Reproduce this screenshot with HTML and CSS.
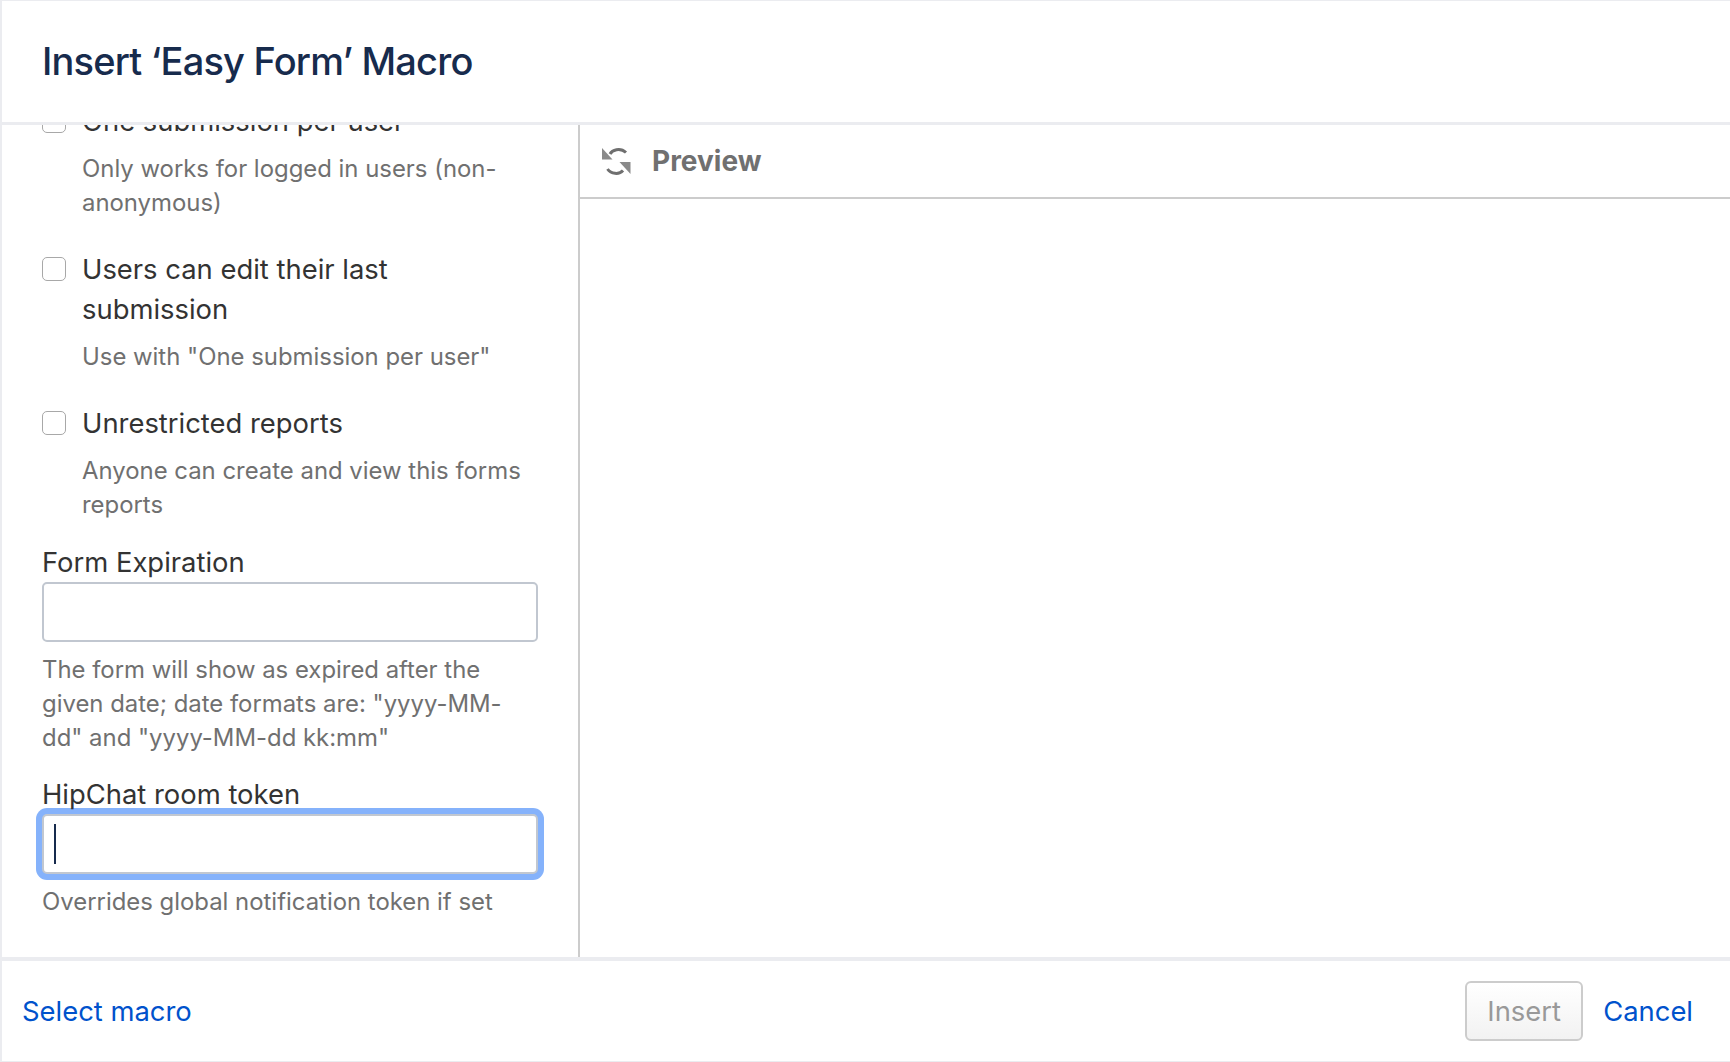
FILE: index.html
```html
<!DOCTYPE html>
<html lang="en">
<head>
<meta charset="utf-8">
<title>Insert 'Easy Form' Macro</title>
<link rel="stylesheet" href="styles.css">
</head>
<body>
<div class="dialog">
  <header class="dialog-header">
    <h1 class="dialog-title">Insert ‘Easy Form’ Macro</h1>
  </header>
  <main class="dialog-body">
    <section class="options">
      <div class="options-inner">
        <div class="check-item">
          <span class="checkbox"></span>
          <div class="check-text">
            <div class="check-label">One submission per user</div>
            <div class="hint">Only works for logged in users (non-anonymous)</div>
          </div>
        </div>
        <div class="check-item">
          <span class="checkbox"></span>
          <div class="check-text">
            <div class="check-label">Users can edit their last submission</div>
            <div class="hint">Use with "One submission per user"</div>
          </div>
        </div>
        <div class="check-item">
          <span class="checkbox"></span>
          <div class="check-text">
            <div class="check-label">Unrestricted reports</div>
            <div class="hint">Anyone can create and view this forms reports</div>
          </div>
        </div>
        <div class="field">
          <div class="field-label">Form Expiration</div>
          <div class="text-input"></div>
          <div class="hint">The form will show as expired after the given date; date formats are: "yyyy-MM-dd" and "yyyy-MM-dd kk:mm"</div>
        </div>
        <div class="field">
          <div class="field-label">HipChat room token</div>
          <div class="text-input focused"><span class="caret"></span></div>
          <div class="hint">Overrides global notification token if set</div>
        </div>
      </div>
    </section>
    <section class="preview">
      <div class="preview-head">
        <svg class="refresh" viewBox="0 0 30 30" width="30" height="30" aria-hidden="true">
          <path d="M9 8C11 4 19 1 25 6.500" fill="none" stroke="#6f6f6f" stroke-width="3"/>
          <path d="M1 2V13.500H11.500z" fill="#8a8a8a"/>
          <path d="M6.500 23C10 28 18 29 22 24.500" fill="none" stroke="#6f6f6f" stroke-width="3"/>
          <path d="M29.500 16H18.500L29.500 28z" fill="#8a8a8a"/>
        </svg>
        <span class="preview-title">Preview</span>
      </div>
    </section>
  </main>
  <footer class="dialog-footer">
    <a class="link" href="#">Select macro</a>
    <div class="actions">
      <button class="btn" type="button" disabled>Insert</button>
      <a class="link" href="#">Cancel</a>
    </div>
  </footer>
</div>
</body>
</html>
```
FILE: styles.css
```css
* { box-sizing: border-box; }
html, body { margin: 0; height: 100%; background: #fff; }
body {
  font-family: Inter, "Liberation Sans", sans-serif;
  color: #333;
}
.dialog {
  display: flex;
  flex-direction: column;
  height: 1062px;
  border-top: 1px solid #ebecf0;
  border-bottom: 1px solid #ebecf0;
  border-left: 2px solid #ebecf0;
  overflow: hidden;
}
.dialog-header {
  height: 124px;
  flex: none;
  display: flex;
  align-items: center;
  padding: 0 0 1px 40px;
  border-bottom: 3px solid #ebecf0;
}
.dialog-title {
  margin: 0;
  font-size: 38px;
  line-height: 48px;
  font-weight: 500;
  color: #172b4d;
  letter-spacing: -0.8px;
}
.dialog-body {
  flex: 1;
  display: flex;
  min-height: 0;
}
.options {
  width: 578px;
  flex: none;
  border-right: 2px solid #ccc;
  overflow: hidden;
  padding: 0 40px;
}
.options-inner { margin-top: -24px; }
.check-item {
  display: flex;
  gap: 16px;
  margin-bottom: 29px;
}
.check-item:nth-child(3) { margin-bottom: 20px; }
.checkbox {
  width: 24px;
  height: 24px;
  flex: none;
  margin-top: 8px;
  background: #fff;
  border: 1px solid #a8a8a8;
  border-radius: 5px;
}
.check-label, .field-label {
  font-size: 27.4px;
  line-height: 40px;
  color: #333;
}
.hint {
  font-size: 23.9px;
  line-height: 34px;
  color: #707070;
}
.check-label + .hint { margin-top: 11px; }
.field { margin-bottom: 19px; }
.text-input {
  height: 60px;
  display: flex;
  align-items: center;
  padding-left: 10px;
  background: #fff;
  border: 2px solid #c1c7d0;
  border-radius: 5px;
  margin-bottom: 11px;
}
.text-input.focused { box-shadow: 0 0 0 6px #85b2fb; }
.caret { width: 2px; height: 40px; background: #172b4d; }
.preview { flex: 1; min-width: 0; }
.preview-head {
  height: 74px;
  display: flex;
  align-items: center;
  gap: 21px;
  padding-left: 21px;
  border-bottom: 2px solid #ccc;
}
.refresh { flex: none; filter: blur(0.4px); }
.preview-title {
  font-size: 28px;
  font-weight: 700;
  color: #707070;
}
.dialog-footer {
  flex: none;
  height: 104px;
  display: flex;
  align-items: center;
  justify-content: space-between;
  padding: 0 37px 0 20px;
  border-top: 4px solid #ebecf0;
}
.link {
  font-size: 27.4px;
  color: #0052cc;
  text-decoration: none;
}
.actions {
  display: flex;
  align-items: center;
  gap: 20px;
}
.btn {
  width: 118px;
  height: 60px;
  padding: 0;
  font: inherit;
  font-size: 27.4px;
  color: #999;
  background: linear-gradient(#fff, #f2f2f2);
  border: 2px solid #ccc;
  border-radius: 6px;
}
```
